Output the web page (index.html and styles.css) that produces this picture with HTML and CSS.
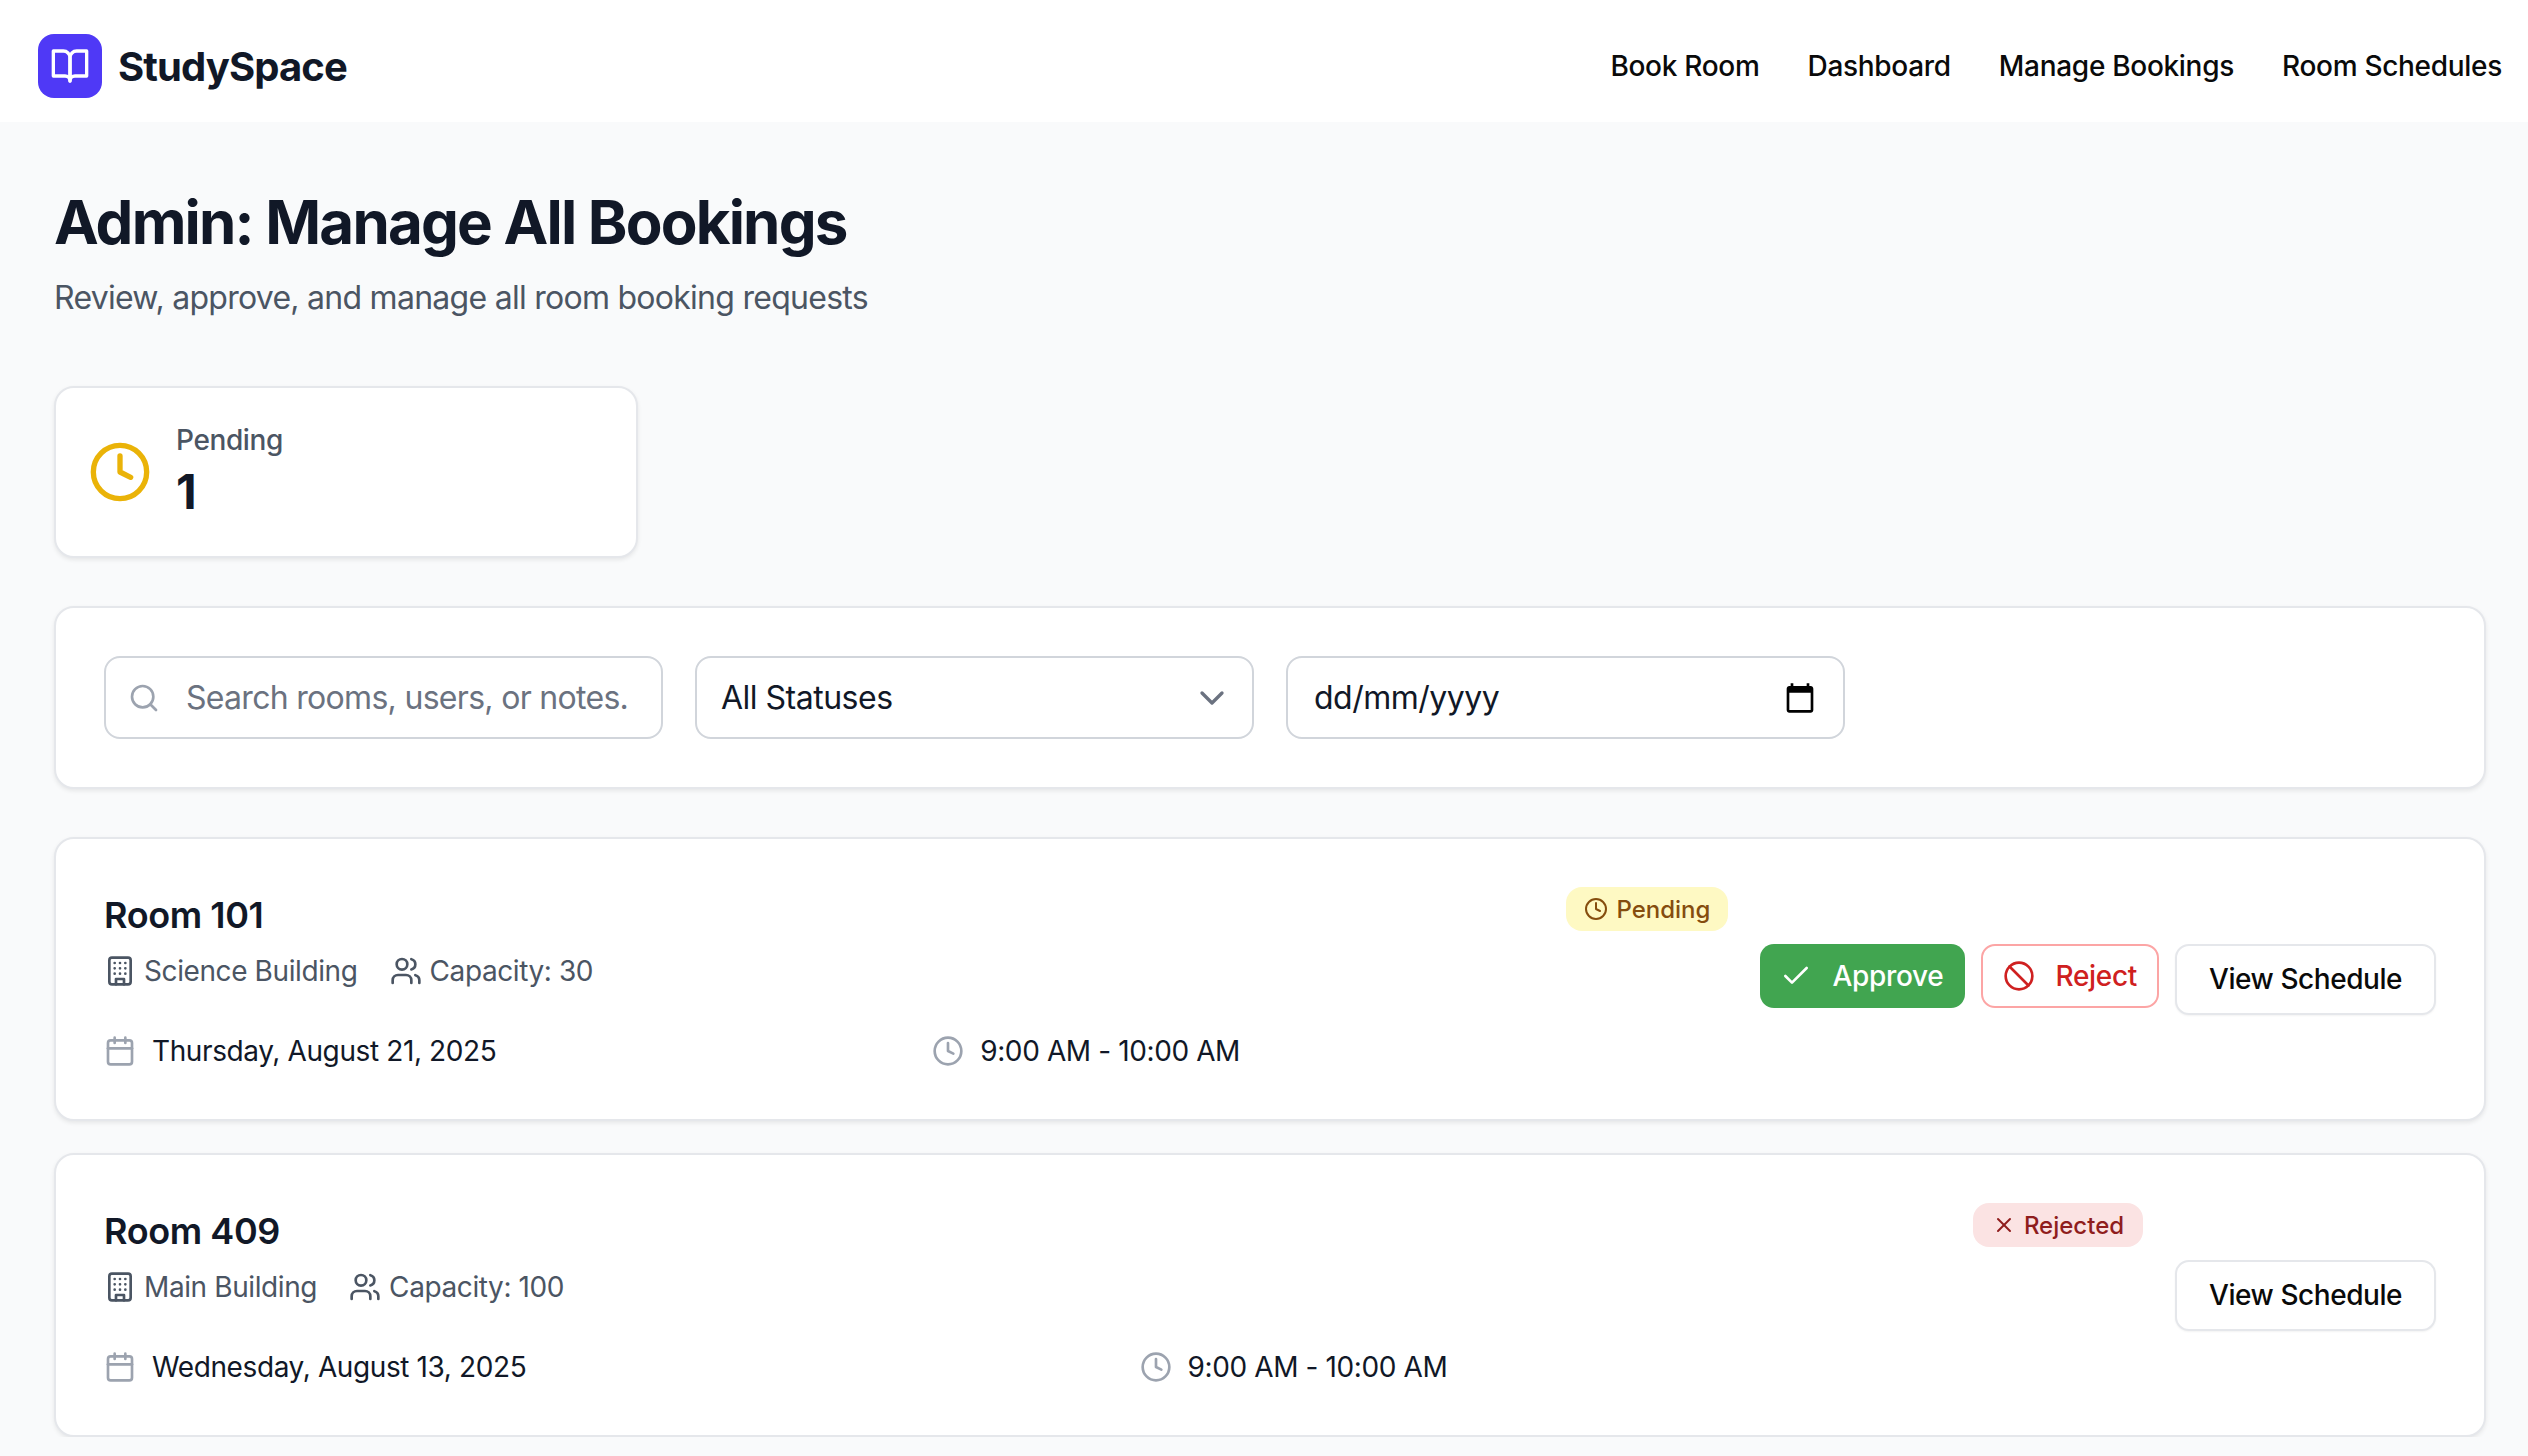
FILE: index.html
```html
<!DOCTYPE html>
<html lang="en">

<head>
    <meta charset="utf-8">
    <title>StudySpace</title>
    <link rel="stylesheet" href="styles.css">
</head>

<body>
    <svg class="sprite" xmlns="http://www.w3.org/2000/svg">
        <symbol id="i-book" viewBox="0 0 24 24"><path d="M2 3h6a4 4 0 0 1 4 4v14a3 3 0 0 0-3-3H2z" /><path d="M22 3h-6a4 4 0 0 0-4 4v14a3 3 0 0 1 3-3h7z" /></symbol>
        <symbol id="i-clock" viewBox="0 0 24 24"><circle cx="12" cy="12" r="10" /><polyline points="12 6 12 12 16 14" /></symbol>
        <symbol id="i-search" viewBox="0 0 24 24"><circle cx="11" cy="11" r="8" /><path d="m21 21-4.3-4.3" /></symbol>
        <symbol id="i-chevron" viewBox="0 0 24 24"><path d="m6 9 6 6 6-6" /></symbol>
        <symbol id="i-building" viewBox="0 0 24 24"><rect x="4" y="2" width="16" height="20" rx="2" ry="2" /><path d="M9 22v-4h6v4" /><path d="M8 6h.01M16 6h.01M12 6h.01M12 10h.01M12 14h.01M16 10h.01M16 14h.01M8 10h.01M8 14h.01" /></symbol>
        <symbol id="i-users" viewBox="0 0 24 24"><path d="M16 21v-2a4 4 0 0 0-4-4H6a4 4 0 0 0-4 4v2" /><circle cx="9" cy="7" r="4" /><path d="M22 21v-2a4 4 0 0 0-3-3.87" /><path d="M16 3.13a4 4 0 0 1 0 7.75" /></symbol>
        <symbol id="i-calendar" viewBox="0 0 24 24"><path d="M8 2v4M16 2v4" /><rect x="3" y="4" width="18" height="18" rx="2" /><path d="M3 10h18" /></symbol>
        <symbol id="i-check" viewBox="0 0 24 24"><path d="M20 6 9 17l-5-5" /></symbol>
        <symbol id="i-ban" viewBox="0 0 24 24"><circle cx="12" cy="12" r="10" /><path d="m4.9 4.9 14.2 14.2" /></symbol>
        <symbol id="i-x" viewBox="0 0 24 24"><path d="M18 6 6 18" /><path d="m6 6 12 12" /></symbol>
    </svg>

    <header class="topbar">
        <a href="#" class="brand">
            <span class="brand-logo"><svg class="icon"><use href="#i-book" /></svg></span>
            <span class="brand-name">StudySpace</span>
        </a>
        <nav class="nav">
            <a href="#">Book Room</a>
            <a href="#">Dashboard</a>
            <a href="#">Manage Bookings</a>
            <a href="#">Room Schedules</a>
        </nav>
    </header>

    <main class="page">
        <h1 class="page-title">Admin: Manage All Bookings</h1>
        <p class="page-sub">Review, approve, and manage all room booking requests</p>

        <section class="stats">
            <div class="card stat">
                <svg class="icon stat-icon"><use href="#i-clock" /></svg>
                <div>
                    <div class="stat-label">Pending</div>
                    <div class="stat-value">1</div>
                </div>
            </div>
        </section>

        <section class="card filters">
            <div class="field">
                <svg class="icon field-search"><use href="#i-search" /></svg>
                <input class="field-input" type="text" placeholder="Search rooms, users, or notes.">
            </div>
            <div class="field field-select">
                <span class="field-text">All Statuses</span>
                <svg class="icon field-chevron"><use href="#i-chevron" /></svg>
            </div>
            <div class="field field-date">
                <span class="field-text">dd/mm/yyyy</span>
                <svg class="field-cal" viewBox="0 0 24 24"><path d="M20 3h-1V1h-2v2H7V1H5v2H4c-1.100 0-2 .9-2 2v16c0 1.100.9 2 2 2h16c1.100 0 2-.9 2-2V5c0-1.100-.9-2-2-2zm0 18H4V8h16v13z" /></svg>
            </div>
        </section>

        <article class="card booking">
            <div class="booking-main">
                <div class="booking-head">
                    <div>
                        <h2 class="room-name">Room 101</h2>
                        <div class="room-meta">
                            <span class="meta-item"><svg class="icon"><use href="#i-building" /></svg>Science Building</span>
                            <span class="meta-item"><svg class="icon"><use href="#i-users" /></svg>Capacity: 30</span>
                        </div>
                    </div>
                    <span class="badge badge-pending"><svg class="icon"><use href="#i-clock" /></svg>Pending</span>
                </div>
                <div class="booking-when">
                    <span class="when-item"><svg class="icon"><use href="#i-calendar" /></svg>Thursday, August 21, 2025</span>
                    <span class="when-item"><svg class="icon"><use href="#i-clock" /></svg>9:00 AM - 10:00 AM</span>
                </div>
            </div>
            <div class="booking-actions">
                <a href="#" class="btn btn-approve"><svg class="icon"><use href="#i-check" /></svg>Approve</a>
                <a href="#" class="btn btn-reject"><svg class="icon"><use href="#i-ban" /></svg>Reject</a>
                <a href="#" class="btn btn-view">View Schedule</a>
            </div>
        </article>

        <article class="card booking">
            <div class="booking-main">
                <div class="booking-head">
                    <div>
                        <h2 class="room-name">Room 409</h2>
                        <div class="room-meta">
                            <span class="meta-item"><svg class="icon"><use href="#i-building" /></svg>Main Building</span>
                            <span class="meta-item"><svg class="icon"><use href="#i-users" /></svg>Capacity: 100</span>
                        </div>
                    </div>
                    <span class="badge badge-rejected"><svg class="icon"><use href="#i-x" /></svg>Rejected</span>
                </div>
                <div class="booking-when">
                    <span class="when-item"><svg class="icon"><use href="#i-calendar" /></svg>Wednesday, August 13, 2025</span>
                    <span class="when-item"><svg class="icon"><use href="#i-clock" /></svg>9:00 AM - 10:00 AM</span>
                </div>
            </div>
            <div class="booking-actions">
                <a href="#" class="btn btn-view">View Schedule</a>
            </div>
        </article>
    </main>
</body>

</html>
```

FILE: styles.css
```css
* {
    box-sizing: border-box;
}

body {
    margin: 0;
    background-color: #f9fafb;
    color: #111827;
    font-family: Inter, "Liberation Sans", sans-serif;
}

a {
    color: inherit;
    text-decoration: none;
}

.sprite {
    display: none;
}

.icon {
    fill: none;
    stroke: currentColor;
    stroke-width: 2;
    stroke-linecap: round;
    stroke-linejoin: round;
    flex-shrink: 0;
}

/* top bar */
.topbar {
    display: flex;
    align-items: center;
    justify-content: space-between;
    height: 122px;
    padding: 10px 26px 0 38px;
    background-color: #fff;
}

.brand {
    display: flex;
    align-items: center;
    gap: 16px;
}

.brand-logo {
    display: flex;
    align-items: center;
    justify-content: center;
    width: 64px;
    height: 64px;
    border-radius: 16px;
    background-color: #4f39f6;
    color: #fff;
}

.brand-logo .icon {
    width: 40px;
    height: 40px;
}

.brand-name {
    font-size: 40px;
    font-weight: 700;
    letter-spacing: -0.9px;
    color: #111827;
}

.nav {
    display: flex;
    gap: 48px;
    font-size: 28px;
    font-weight: 500;
    letter-spacing: -0.3px;
    color: #0a0a0a;
}

/* page */
.page {
    padding: 64px 42px 0 54px;
}

.page-title {
    margin: 0;
    font-size: 60px;
    line-height: 72px;
    font-weight: 700;
    letter-spacing: -1.8px;
    color: #111827;
}

.page-sub {
    margin: 16px 0 0;
    font-size: 32px;
    line-height: 48px;
    letter-spacing: -0.73px;
    color: #4b5563;
}

.card {
    background-color: #fff;
    border: 2px solid #e5e7eb;
    border-radius: 20px;
    box-shadow: 0 2px 4px rgba(0, 0, 0, 0.08);
}

.stats {
    display: grid;
    grid-template-columns: repeat(4, minmax(0, 1fr));
    gap: 32px;
    margin-top: 64px;
}

.stat {
    display: flex;
    align-items: center;
    gap: 24px;
    padding: 32px;
}

.stat-icon {
    width: 64px;
    height: 64px;
    color: #eab308;
}

.stat-label {
    font-size: 28px;
    line-height: 40px;
    font-weight: 500;
    letter-spacing: -0.4px;
    color: #4b5563;
}

.stat-value {
    font-size: 48px;
    line-height: 64px;
    font-weight: 700;
    color: #111827;
}

/* filters */
.filters {
    display: grid;
    grid-template-columns: repeat(4, minmax(0, 1fr));
    gap: 32px;
    margin-top: 48px;
    padding: 48px;
}

.field {
    display: flex;
    align-items: center;
    height: 83px;
    padding: 0 24px;
    border: 2px solid #d1d5db;
    border-radius: 16px;
    font-size: 32px;
    letter-spacing: -0.5px;
    background-color: #fff;
}

.field-search {
    width: 32px;
    height: 32px;
    margin-left: -2px;
    color: #9ca3af;
}

.field-input {
    flex: 1;
    min-width: 0;
    margin-left: 26px;
    padding: 0;
    border: 0;
    outline: 0;
    font: inherit;
    letter-spacing: -0.7px;
    color: #111827;
}

.field-input::placeholder {
    color: #6b7280;
}

.field-text {
    flex: 1;
    color: #111827;
}

.field-date {
    padding-left: 26px;
}

.field-chevron {
    width: 40px;
    height: 40px;
    margin-right: -4px;
    color: #6b7280;
}

.field-cal {
    width: 32px;
    height: 32px;
    margin-right: 3px;
    fill: #000;
}

/* booking rows */
.booking {
    display: flex;
    align-items: center;
    gap: 32px;
    margin-top: 32px;
    padding: 48px;
}

.filters + .booking {
    margin-top: 48px;
}

.booking-main {
    flex: 1;
    min-width: 0;
}

.booking-head {
    display: flex;
    align-items: flex-start;
    justify-content: space-between;
}

.room-name {
    margin: 0;
    font-size: 36px;
    line-height: 56px;
    font-weight: 600;
    letter-spacing: -0.4px;
    color: #111827;
}

.room-meta {
    display: flex;
    gap: 32px;
    margin-top: 8px;
    font-size: 28px;
    line-height: 40px;
    letter-spacing: -0.4px;
    color: #4b5563;
}

.meta-item {
    display: flex;
    align-items: center;
    gap: 8px;
}

.meta-item .icon {
    width: 32px;
    height: 32px;
}

.badge {
    display: inline-flex;
    align-items: center;
    gap: 8px;
    height: 44px;
    padding: 0 18px;
    border-radius: 16px;
    font-size: 24px;
    font-weight: 500;
}

.badge .icon {
    width: 24px;
    height: 24px;
}

.badge-pending {
    background-color: #fef9c3;
    color: #854d0e;
}

.badge-rejected {
    padding: 0 19px;
    background-color: #fbe3e3;
    color: #8f1d1d;
}

.booking-when {
    display: grid;
    grid-template-columns: 1fr 1fr;
    gap: 32px;
    margin-top: 40px;
    font-size: 28px;
    line-height: 40px;
    letter-spacing: -0.39px;
    color: #111827;
}

.when-item {
    display: flex;
    align-items: center;
    gap: 16px;
}

.when-item .icon {
    width: 32px;
    height: 32px;
    color: #9ca3af;
}

.booking-actions {
    display: flex;
    align-items: flex-start;
    gap: 16px;
}

.btn {
    display: inline-flex;
    align-items: center;
    gap: 20px;
    height: 64px;
    padding: 0 20px;
    border-radius: 14px;
    font-size: 28px;
    font-weight: 500;
    letter-spacing: -0.3px;
}

.btn .icon {
    width: 32px;
    height: 32px;
}

.btn-approve {
    padding-right: 22px;
    background-color: #41a550;
    color: #fff;
}

.btn-reject {
    border: 2px solid #fca5a5;
    background-color: #fff;
    color: #cf2020;
}

.btn-view {
    height: 71px;
    padding: 0 32px;
    border: 2px solid #e5e7eb;
    letter-spacing: -0.45px;
    background-color: #fff;
    color: #0a0a0a;
    box-shadow: 0 1px 2px rgba(0, 0, 0, 0.05);
}
```
